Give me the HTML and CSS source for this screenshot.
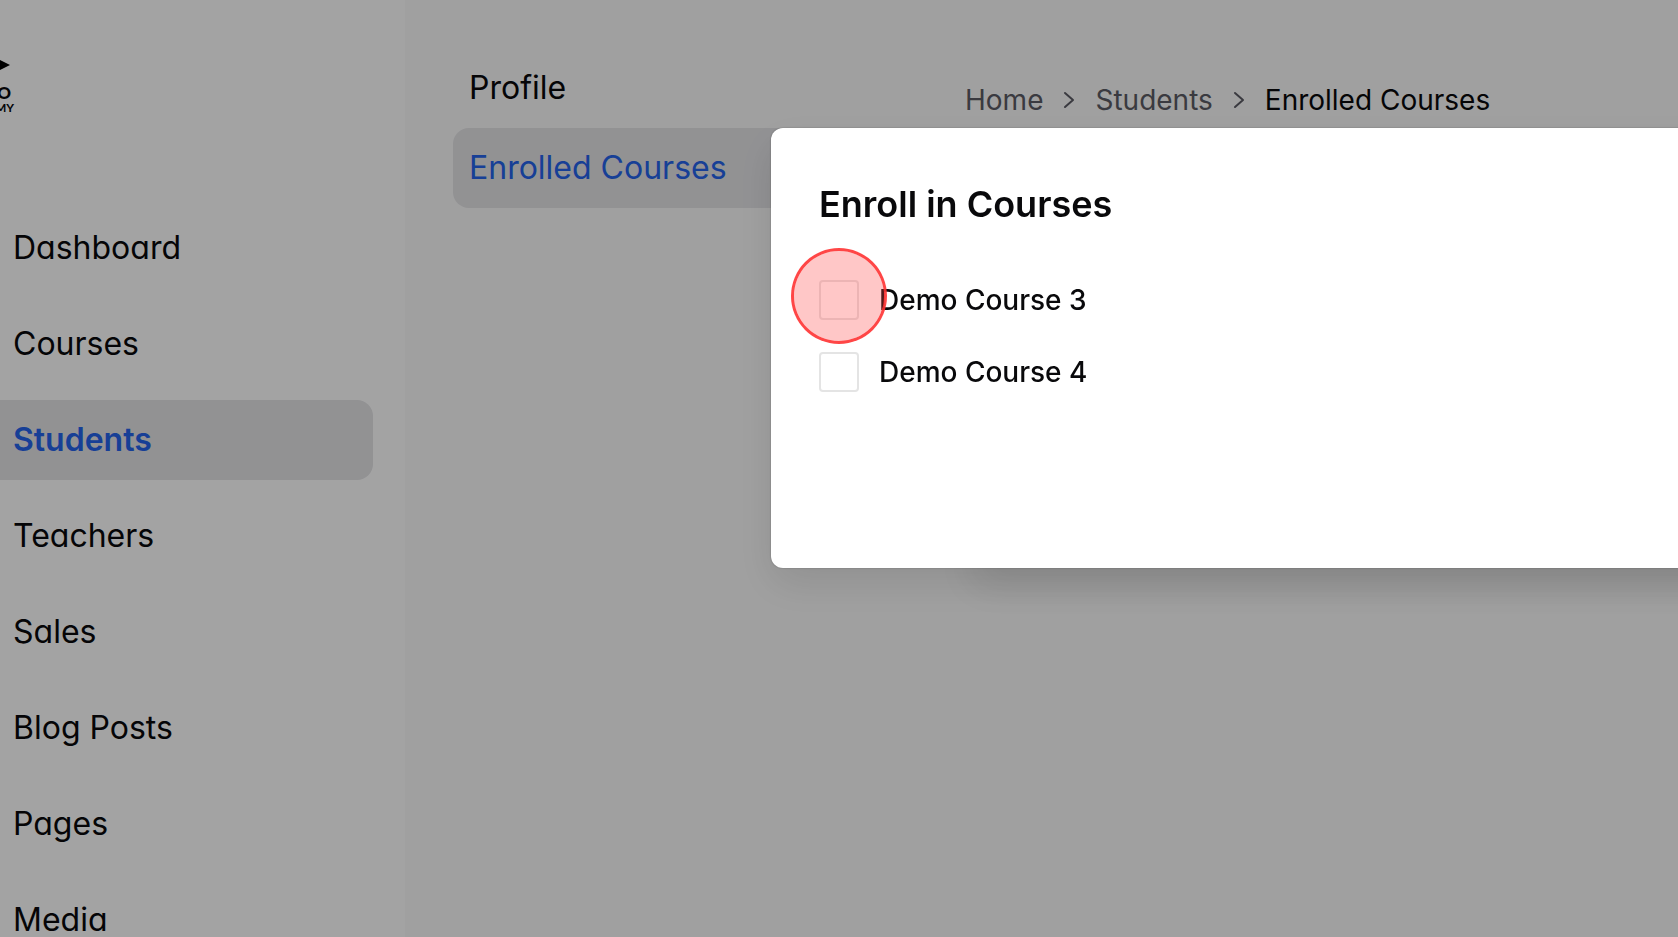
FILE: index.html
```
<!DOCTYPE html>
<html lang="en">
<head>
  <meta charset="utf-8">
  <title>Enrolled Courses</title>
  <link rel="stylesheet" href="styles.css">
</head>
<body>
  <div class="app">
    <aside class="sidebar">
      <div class="logo">
        <svg class="logo-mark" width="10" height="10" viewBox="0 0 10 10"><path d="M0 0 10 5 0 10Z" /></svg>
        <span class="logo-name">O</span>
        <span class="logo-sub">MY</span>
      </div>
      <nav class="menu">
        <a href="#" class="menu-item">Dashboard</a>
        <a href="#" class="menu-item">Courses</a>
        <a href="#" class="menu-item active">Students</a>
        <a href="#" class="menu-item">Teachers</a>
        <a href="#" class="menu-item">Sales</a>
        <a href="#" class="menu-item">Blog Posts</a>
        <a href="#" class="menu-item">Pages</a>
        <a href="#" class="menu-item">Media</a>
      </nav>
    </aside>

    <main class="main">
      <nav class="tabs">
        <a href="#" class="tab">Profile</a>
        <a href="#" class="tab active">Enrolled Courses</a>
      </nav>
      <nav class="breadcrumb">
        <a href="#" class="crumb">Home</a>
        <svg class="chevron" width="12" height="20" viewBox="0 0 12 20"><path d="M2 3l8 7-8 7" /></svg>
        <a href="#" class="crumb">Students</a>
        <svg class="chevron" width="12" height="20" viewBox="0 0 12 20"><path d="M2 3l8 7-8 7" /></svg>
        <span class="crumb current">Enrolled Courses</span>
      </nav>
    </main>
  </div>

  <div class="overlay">
    <div class="modal" role="dialog" aria-labelledby="modal-title">
      <h2 class="modal-title" id="modal-title">Enroll in Courses</h2>
      <div class="course">
        <input type="checkbox" class="checkbox" id="course-3">
        <label for="course-3">Demo Course 3</label>
        <span class="click-marker"></span>
      </div>
      <div class="course">
        <input type="checkbox" class="checkbox" id="course-4">
        <label for="course-4">Demo Course 4</label>
      </div>
    </div>
  </div>
</body>
</html>
```
FILE: styles.css
```
* {
  box-sizing: border-box;
  margin: 0;
  padding: 0;
}

body {
  font-family: Inter, "Liberation Sans", sans-serif;
  color: #09090b;
  height: 100vh;
  overflow: hidden;
}

a {
  color: inherit;
  text-decoration: none;
}

.app {
  display: flex;
  height: 100vh;
}

/* sidebar */
.sidebar {
  flex: 0 0 405px;
  background-color: #fff;
  padding: 60px 32px 0 0;
  overflow: hidden;
}

.logo {
  display: flex;
  flex-direction: column;
  align-items: flex-end;
  width: 14px;
  height: 148px;
}

.logo-mark {
  flex-shrink: 0;
  margin-right: 4px;
}

.logo-name {
  margin: 14px 3px 0 0;
  font-family: Lato, sans-serif;
  font-size: 17px;
  font-weight: 900;
  line-height: 18px;
}

.logo-sub {
  font-family: Lato, sans-serif;
  font-size: 12px;
  font-weight: 700;
  line-height: 12px;
}

.menu {
  display: flex;
  flex-direction: column;
  gap: 16px;
}

.menu-item {
  padding: 16px 13px;
  border-radius: 0 16px 16px 0;
  font-size: 32px;
  line-height: 48px;
  font-feature-settings: "cv11";
}

.active {
  background-color: #e4e4e7;
  color: #2563eb;
}

.menu-item.active {
  font-weight: 600;
}

/* page */
.main {
  flex: 1;
  display: flex;
  align-items: flex-start;
  gap: 48px;
  padding: 48px;
  background-color: #fafafa;
}

.tabs {
  display: flex;
  flex-direction: column;
  flex: 0 0 464px;
}

.tab {
  padding: 16px;
  border-radius: 16px;
  font-size: 32px;
  line-height: 48px;
}

.breadcrumb {
  display: flex;
  align-items: center;
  gap: 20px;
  padding-top: 32px;
  font-size: 28px;
  line-height: 40px;
  white-space: nowrap;
}

.crumb {
  color: #5b5b64;
}

.current {
  color: #09090b;
}

.chevron {
  fill: none;
  stroke: #5b5b64;
  stroke-width: 2;
  stroke-linecap: round;
  stroke-linejoin: round;
}

/* modal */
.overlay {
  position: fixed;
  inset: 0;
  padding: 128px 0 0 771px;
  background-color: rgba(0, 0, 0, 0.36);
  overflow: hidden;
}

/* runs on past the right edge of the window */
.modal {
  min-height: 440px;
  margin-right: -50%;
  padding: 48px;
  background-color: #fff;
  border-radius: 12px;
  box-shadow: 0 0 2px rgba(0, 0, 0, 0.3), 0 16px 40px rgba(0, 0, 0, 0.1), 0 216px 40px -200px rgba(0, 0, 0, 0.12);
}

.modal-title {
  margin-bottom: 48px;
  font-size: 36px;
  font-weight: 600;
  line-height: 56px;
}

.course {
  position: relative;
  display: flex;
  align-items: center;
  gap: 20px;
  margin-bottom: 32px;
  font-size: 28px;
  font-weight: 500;
  line-height: 40px;
}

.checkbox {
  appearance: none;
  width: 40px;
  height: 40px;
  border: 2px solid #e4e4e4;
  border-radius: 4px;
}

.click-marker {
  position: absolute;
  top: -32px;
  left: -28px;
  width: 96px;
  height: 96px;
  border: 3px solid rgba(255, 50, 50, 0.9);
  border-radius: 50%;
  background-color: rgba(255, 70, 70, 0.3);
  background-clip: padding-box;
  pointer-events: none;
}
```
